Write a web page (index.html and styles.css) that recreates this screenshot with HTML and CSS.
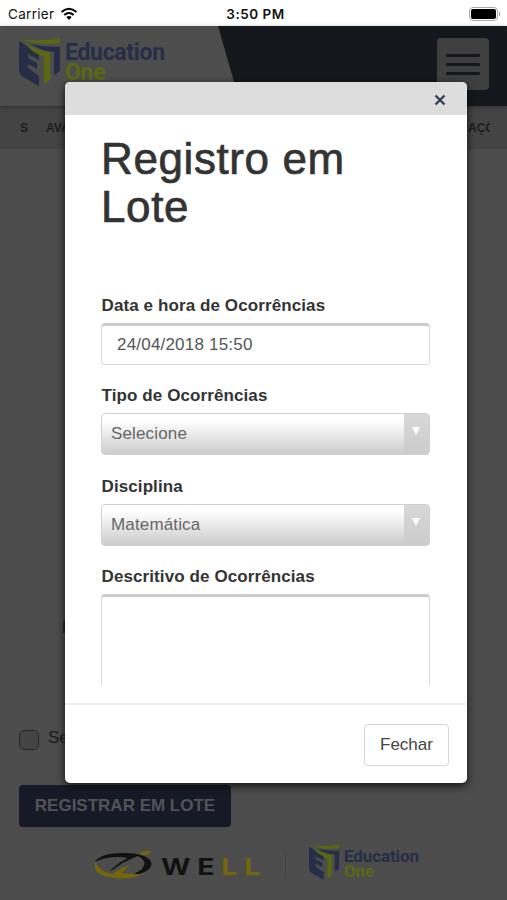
FILE: index.html
```html
<!DOCTYPE html>
<html lang="pt-BR">
<head>
  <meta charset="UTF-8" />
  <meta name="viewport" content="width=device-width, initial-scale=1" />
  <title>Education One</title>
  <link rel="stylesheet" href="styles.css">
</head>

<body>
  <!-- Shared logo symbol -->
  <svg class="defs" width="0" height="0">
    <symbol id="book" viewBox="0 0 42 49">
      <path class="blue" d="M0 3 L20 15 V22 L9 16 V20 L18 25 V31 L9 26 V30 L20 38 V48 L4 39 Q0 36 0 32 Z" />
      <path class="blue" d="M12 6 Q24 9 41 9 V31 Q41 34 35 37 V14 Q22 13 12 6 Z" />
      <path class="lime" d="M1 1 Q20 4 41 0 V5 Q20 8 1 1 Z" />
      <path class="lime" d="M5 4 Q18 13 31 14 V42 L25 46 V19 Q13 15 5 4 Z" />
    </symbol>
  </svg>

  <div class="status">
    <span class="carrier">Carrier
      <svg width="18" height="14" viewBox="0 0 18 14">
        <path d="M1.5 5 Q9 -1.5 16.5 5 M4.3 8 Q9 4 13.7 8" fill="none" stroke="#000" stroke-width="2.1" />
        <path d="M6.3 10 Q9 7.8 11.7 10 L9 13 Z" />
      </svg>
    </span>
    <span class="time">3:50 PM</span>
    <span class="battery"><i></i></span>
  </div>

  <div class="page">
    <header class="header">
      <svg class="slant" viewBox="0 0 290 80" preserveAspectRatio="none"><path d="M0 0 H290 V80 H23 Z" /></svg>
      <div class="logo">
        <svg class="book"><use href="#book" /></svg>
        <div class="logo-text">Education<br><span>One</span></div>
      </div>
      <button class="menu"><i></i><i></i><i></i></button>
    </header>

    <nav class="tabs">
      <span>S</span>
      <span>AVALIAÇÕES</span>
      <span class="last">AÇÕES</span>
    </nav>

    <main class="content">
      <div class="name">N</div>
      <label class="check"><i></i>Selecionar</label>
      <button class="register">REGISTRAR EM LOTE</button>
    </main>

    <footer class="footer">
      <svg class="swirl" viewBox="0 0 60 30">
        <path class="gold" d="M2 11 Q-2 24 16 27 Q38 32 53 21 Q42 25 28 23 L37 14 Q27 18 19 24 Q5 22 2 11 Z M47 3 Q51 0 58 1 Q55 6 47 5 Z" />
        <path class="black" d="M1 12 Q8 2 34 3 Q55 4 58 13 Q59 20 46 24 H40 Q52 19 51 12 Q49 8 44 6 L29 13 L16 22 Q21 15 34 8 Q17 5 1 12 Z" />
      </svg>
      <div class="well">WE<span>LL</span></div>
      <div class="divider"></div>
      <div class="logo small">
        <svg class="book"><use href="#book" /></svg>
        <div class="logo-text">Education<br><span>One</span></div>
      </div>
    </footer>
  </div>

  <div class="modal">
    <div class="modal-header">
      <button class="close"><svg width="12" height="12" viewBox="0 0 12 12"><path d="M1.5 1.5 L10.5 10.5 M10.5 1.5 L1.5 10.5" /></svg></button>
    </div>
    <div class="modal-body">
      <h1>Registro em<br>Lote</h1>
      <div class="field">
        <label>Data e hora de Ocorrências</label>
        <div class="input">24/04/2018 15:50</div>
      </div>
      <div class="field">
        <label>Tipo de Ocorrências</label>
        <div class="select"><span>Selecione</span><b><i></i></b></div>
      </div>
      <div class="field">
        <label>Disciplina</label>
        <div class="select"><span>Matemática</span><b><i></i></b></div>
      </div>
      <div class="field">
        <label>Descritivo de Ocorrências</label>
        <div class="input textarea"></div>
      </div>
    </div>
    <div class="modal-footer">
      <button class="btn">Fechar</button>
    </div>
  </div>
</body>
</html>
```

FILE: styles.css
```css
* {
  box-sizing: border-box;
}
body {
  font-family: "Liberation Sans", Arial, sans-serif;
  margin: 0;
  height: 900px;
  overflow: hidden;
  background: #fff;
  color: #333;
}
button {
  font-family: inherit;
  border: 0;
  padding: 0;
}
.defs {
  position: absolute;
}
.blue { fill: #262d46; }
.lime { fill: #596811; }
.status {
  height: 26px;
  padding: 1px 7px 0 8px;
  display: grid;
  grid-template-columns: 1fr auto 1fr;
  align-items: center;
  font-family: Inter, sans-serif;
  font-size: 13px;
  color: #111;
}
.carrier {
  display: flex;
  align-items: center;
  gap: 6px;
  font-size: 13.5px;
  letter-spacing: 0.3px;
}
.time {
  font-weight: 600;
  font-size: 13.5px;
  letter-spacing: 0.5px;
  padding-left: 3px;
}
.battery {
  justify-self: end;
  width: 29px;
  height: 14px;
  margin-right: 2px;
  padding: 1px;
  border: 1px solid #aaa;
  border-radius: 4px;
  position: relative;
}
.battery i {
  display: block;
  height: 10px;
  border-radius: 2px;
  background: #000;
}
.battery::after {
  content: "";
  position: absolute;
  right: -3px;
  top: 4px;
  width: 1px;
  height: 4px;
  background: #999;
}
.page {
  height: 874px;
  background: #4c4c4c;
  display: flex;
  flex-direction: column;
}
.header {
  height: 80px;
  flex: none;
  position: relative;
  display: flex;
  justify-content: space-between;
  padding: 12px 18px 0 19px;
  background: #4d4d4d;
  box-shadow: 0 1px 4px rgba(0,0,0,0.35);
}
.slant {
  position: absolute;
  top: 0;
  right: 0;
  width: 289px;
  height: 80px;
  fill: #14181d;
}
.logo {
  display: flex;
  gap: 4px;
}
.book {
  width: 42px;
  height: 49px;
}
.logo-text {
  font-family: Roboto, sans-serif;
  font-weight: 700;
  font-size: 23px;
  line-height: 20px;
  letter-spacing: -0.3px;
  padding-top: 5px;
  color: #262d46;
}
.logo-text span {
  color: #596811;
}
.menu {
  position: relative;
  width: 52px;
  height: 52px;
  border-radius: 4px;
  background: #3f3f40;
  display: flex;
  flex-direction: column;
  align-items: center;
  justify-content: center;
  gap: 6px;
}
.menu i {
  width: 34px;
  height: 3px;
  border-radius: 1px;
  background: #14181d;
}
.tabs {
  height: 43px;
  flex: none;
  display: flex;
  align-items: center;
  gap: 18px;
  padding: 0 17px 0 20px;
  background: #444;
  color: #1c1c1c;
  font-size: 12px;
  font-weight: 700;
}
.tabs .last {
  width: 22px;
  overflow: hidden;
  margin-left: auto;
}
.content {
  padding: 470px 19px 0;
  color: #191919;
}
.name {
  margin-left: 43px;
  font-size: 16px;
  line-height: 18px;
}
.check {
  display: flex;
  align-items: center;
  gap: 9px;
  margin-top: 90px;
  height: 22px;
  font-size: 17px;
}
.check i {
  width: 20px;
  height: 20px;
  margin-top: 3px;
  border: 1.5px solid #262626;
  border-radius: 5px;
  background: #444;
}
.register {
  display: block;
  margin-top: 36px;
  width: 212px;
  height: 42px;
  border-radius: 4px;
  background: #161a27;
  color: #515358;
  font-size: 17px;
  font-weight: 700;
}
.footer {
  display: flex;
  padding: 17px 0 0 93px;
}
.swirl {
  width: 61px;
  height: 30px;
  margin-top: 6px;
}
.gold { fill: #75660a; }
.black { fill: #111; }
.well {
  margin: 11px 0 0 7px;
  width: 101px;
  font-family: Inter, sans-serif;
  font-size: 23px;
  line-height: 25px;
  font-weight: 700;
  letter-spacing: 5.4px;
  color: #111;
  transform: scaleX(1.24);
  transform-origin: left;
}
.well span {
  color: #75660a;
}
.divider {
  width: 1px;
  height: 28px;
  margin: 7px 23px 0;
  background: #414141;
}
.small {
  gap: 4px;
}
.small .book {
  width: 31px;
  height: 37px;
}
.small .logo-text {
  font-size: 17px;
  line-height: 15px;
  letter-spacing: -0.1px;
  padding-top: 5px;
}
.modal {
  position: absolute;
  top: 82px;
  left: 65px;
  width: 402px;
  height: 701px;
  display: flex;
  flex-direction: column;
  overflow: hidden;
  border-radius: 5px;
  background: #fff;
  box-shadow: 0 3px 9px rgba(0,0,0,0.75);
}
.modal-header {
  height: 33px;
  flex: none;
  display: flex;
  justify-content: flex-end;
  align-items: center;
  padding: 3px 21px 0 0;
  background: #ddd;
}
.close {
  display: flex;
  background: none;
}
.close path {
  fill: none;
  stroke: #363d57;
  stroke-width: 2.4;
}
.modal-body {
  height: 570px;
  flex: none;
  overflow: hidden;
  padding: 20px 37px 0 36px;
}
h1 {
  margin: 0 0 64px;
  font-size: 44px;
  line-height: 48px;
  font-weight: 400;
  letter-spacing: 0.6px;
  -webkit-text-stroke: 0.7px #333;
}
.field {
  margin-bottom: 20.4px;
}
.field label {
  display: block;
  height: 28px;
  padding-left: 0.5px;
  line-height: 21px;
  font-size: 17px;
  font-weight: 700;
  letter-spacing: 0.1px;
}
.input {
  height: 42px;
  border: 1.5px solid #d9d9d9;
  border-top: 3px solid #ccc;
  border-radius: 4px;
  padding-left: 15px;
  line-height: 37px;
  font-size: 17px;
  letter-spacing: 0.2px;
  color: #555;
}
.textarea {
  height: 120px;
}
.select {
  display: flex;
  justify-content: space-between;
  height: 42px;
  border: 1px solid #d0d0d0;
  border-radius: 4px;
  padding-left: 9px;
  line-height: 40px;
  font-size: 17px;
  letter-spacing: 0.15px;
  color: #666;
  background: linear-gradient(#fff 15%, #ccc 100%);
}
.select b {
  width: 25px;
  padding: 13px 0 0 8px;
  background: linear-gradient(#d8d8d8, #ccc);
}
.select i {
  display: block;
  width: 0;
  border: 4px solid transparent;
  border-top: 8px solid #fff;
  border-bottom: 0;
}
.modal-footer {
  flex: 1;
  margin-top: 18px;
  padding: 19px 18px 0;
  border-top: 2px solid #eee;
  text-align: right;
}
.btn {
  width: 85px;
  height: 42px;
  border: 1.5px solid #d5d5d5;
  border-radius: 4px;
  background: #fff;
  color: #444;
  font-size: 17px;
}
```
